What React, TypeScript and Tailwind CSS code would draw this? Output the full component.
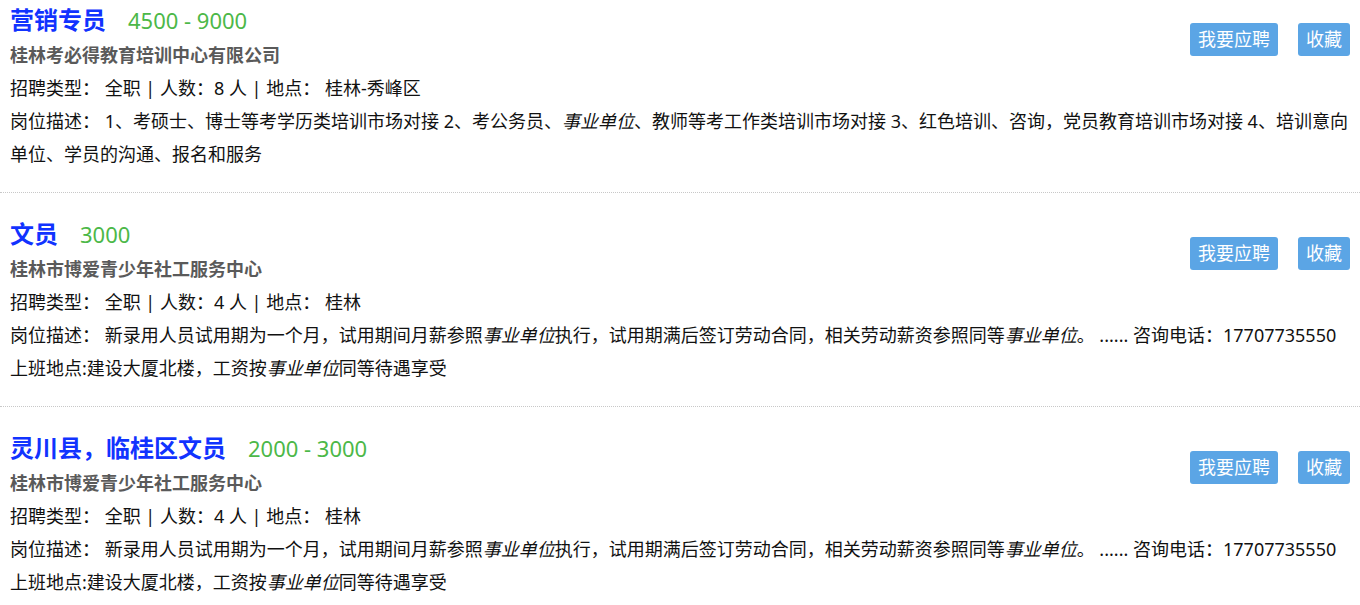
import React from "react";

type Seg = { t: string; em?: boolean };

type Job = {
  title: string;
  salary: string;
  company: string;
  info: string;
  desc: Seg[][];
};

const jobs: Job[] = [
  {
    title: "营销专员",
    salary: "4500 - 9000",
    company: "桂林考必得教育培训中心有限公司",
    info: "全职 | 人数：8 人 | 地点： 桂林-秀峰区",
    desc: [
      [
        { t: "1、考硕士、博士等考学历类培训市场对接 2、考公务员、" },
        { t: "事业单位", em: true },
        { t: "、教师等考工作类培训市场对接 3、红色培训、咨询，党员教育培训市场对接 4、培训意向" },
      ],
      [{ t: "单位、学员的沟通、报名和服务" }],
    ],
  },
  {
    title: "文员",
    salary: "3000",
    company: "桂林市博爱青少年社工服务中心",
    info: "全职 | 人数：4 人 | 地点： 桂林",
    desc: [
      [
        { t: "新录用人员试用期为一个月，试用期间月薪参照" },
        { t: "事业单位", em: true },
        { t: "执行，试用期满后签订劳动合同，相关劳动薪资参照同等" },
        { t: "事业单位", em: true },
        { t: "。 ...... 咨询电话：17707735550" },
      ],
      [
        { t: "上班地点:建设大厦北楼，工资按" },
        { t: "事业单位", em: true },
        { t: "同等待遇享受" },
      ],
    ],
  },
  {
    title: "灵川县，临桂区文员",
    salary: "2000 - 3000",
    company: "桂林市博爱青少年社工服务中心",
    info: "全职 | 人数：4 人 | 地点： 桂林",
    desc: [
      [
        { t: "新录用人员试用期为一个月，试用期间月薪参照" },
        { t: "事业单位", em: true },
        { t: "执行，试用期满后签订劳动合同，相关劳动薪资参照同等" },
        { t: "事业单位", em: true },
        { t: "。 ...... 咨询电话：17707735550" },
      ],
      [
        { t: "上班地点:建设大厦北楼，工资按" },
        { t: "事业单位", em: true },
        { t: "同等待遇享受" },
      ],
    ],
  },
];

function Item({ job }: { job: Job }) {
  return (
    <div className="border-b border-dotted border-[#c8c8c8] px-[10px] pt-[22px] pb-[21px]">
      <div className="float-right mt-[22px] flex gap-[20px]">
        <button className="h-[33px] rounded-[3px] bg-[#5ba5e5] px-[8px] text-[18px] leading-[33px] text-white">
          我要应聘
        </button>
        <button className="h-[33px] rounded-[3px] bg-[#5ba5e5] px-[8px] text-[18px] leading-[33px] text-white">
          收藏
        </button>
      </div>
      <div className="flex h-[38px] items-center">
        <span className="text-[24px] font-bold text-[#1133ff]">{job.title}</span>
        <span className="ml-[22px] text-[22px] text-[#4cb848]">{job.salary}</span>
      </div>
      <div className="h-[33px] text-[18px] font-bold leading-[33px] text-[#5a5a5a]">{job.company}</div>
      <div className="h-[33px] text-[18px] leading-[33px] text-[#111]">
        招聘类型： {job.info}
      </div>
      <div className="text-[18px] leading-[33px] text-[#111]">
        {job.desc.map((line, i) => (
          <div key={i} className="whitespace-nowrap">
            {i === 0 ? "岗位描述： " : ""}
            {line.map((s, j) =>
              s.em ? (
                <em key={j} className="italic">
                  {s.t}
                </em>
              ) : (
                <span key={j}>{s.t}</span>
              )
            )}
          </div>
        ))}
      </div>
    </div>
  );
}

export default function App() {
  return (
    <div
      className="h-[605px] w-[1360px] overflow-hidden bg-white"
      style={{ fontFamily: '"Noto Sans", "Noto Sans CJK SC", sans-serif' }}
    >
      <div className="-mt-[21px]">
        {jobs.map((j, i) => (
          <Item key={i} job={j} />
        ))}
      </div>
    </div>
  );
}
